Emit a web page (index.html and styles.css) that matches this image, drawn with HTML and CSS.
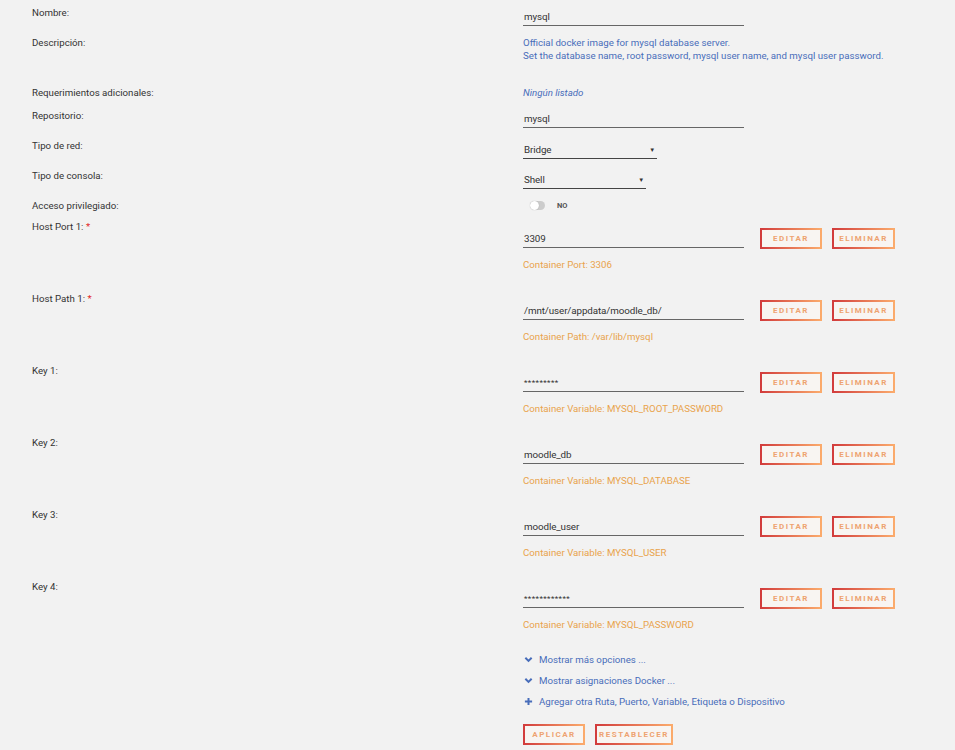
FILE: index.html
```html
<!DOCTYPE html>
<html lang="es">
<head>
    <meta charset="UTF-8">
    <title>Docker - mysql</title>
    <link rel="stylesheet" href="styles.css">
</head>
<body>
    <form class="form">
        <div class="row row-name">
            <div class="label">Nombre:</div>
            <div class="value"><div class="field wide">mysql</div></div>
        </div>
        <div class="row row-desc">
            <div class="label">Descripción:</div>
            <div class="value blue">Official docker image for mysql database server.<br>Set the database name, root password, mysql user name, and mysql user password.</div>
        </div>
        <div class="row row-req">
            <div class="label">Requerimientos adicionales:</div>
            <div class="value blue italic">Ningún listado</div>
        </div>
        <div class="row row-repo">
            <div class="label">Repositorio:</div>
            <div class="value"><div class="field wide">mysql</div></div>
        </div>
        <div class="row row-net">
            <div class="label">Tipo de red:</div>
            <div class="value"><div class="field select net">Bridge<span class="caret">▼</span></div></div>
        </div>
        <div class="row row-shell">
            <div class="label">Tipo de consola:</div>
            <div class="value"><div class="field select shell">Shell<span class="caret">▼</span></div></div>
        </div>
        <div class="row row-priv">
            <div class="label">Acceso privilegiado:</div>
            <div class="value toggle-wrap"><span class="toggle"><span class="knob"></span></span><span class="toggle-text">NO</span></div>
        </div>

        <div class="row row-cfg">
            <div class="label">Host Port 1: <span class="req">*</span></div>
            <div class="value">
                <div class="cfg-line"><div class="field wide">3309</div><button type="button" class="btn">Editar</button><button type="button" class="btn">Eliminar</button></div>
                <div class="orange">Container Port: 3306</div>
            </div>
        </div>
        <div class="row row-cfg">
            <div class="label">Host Path 1: <span class="req">*</span></div>
            <div class="value">
                <div class="cfg-line"><div class="field wide">/mnt/user/appdata/moodle_db/</div><button type="button" class="btn">Editar</button><button type="button" class="btn">Eliminar</button></div>
                <div class="orange">Container Path: /var/lib/mysql</div>
            </div>
        </div>
        <div class="row row-cfg">
            <div class="label">Key 1:</div>
            <div class="value">
                <div class="cfg-line"><div class="field wide masked">*********</div><button type="button" class="btn">Editar</button><button type="button" class="btn">Eliminar</button></div>
                <div class="orange">Container Variable: MYSQL_ROOT_PASSWORD</div>
            </div>
        </div>
        <div class="row row-cfg">
            <div class="label">Key 2:</div>
            <div class="value">
                <div class="cfg-line"><div class="field wide">moodle_db</div><button type="button" class="btn">Editar</button><button type="button" class="btn">Eliminar</button></div>
                <div class="orange">Container Variable: MYSQL_DATABASE</div>
            </div>
        </div>
        <div class="row row-cfg">
            <div class="label">Key 3:</div>
            <div class="value">
                <div class="cfg-line"><div class="field wide">moodle_user</div><button type="button" class="btn">Editar</button><button type="button" class="btn">Eliminar</button></div>
                <div class="orange">Container Variable: MYSQL_USER</div>
            </div>
        </div>
        <div class="row row-cfg">
            <div class="label">Key 4:</div>
            <div class="value">
                <div class="cfg-line"><div class="field wide masked">************</div><button type="button" class="btn">Editar</button><button type="button" class="btn">Eliminar</button></div>
                <div class="orange">Container Variable: MYSQL_PASSWORD</div>
            </div>
        </div>

        <div class="row row-links">
            <div class="label"></div>
            <div class="value">
                <div class="link"><svg class="ico" viewBox="0 0 10 10"><path d="M1.5 3 L5 6.5 L8.5 3" fill="none" stroke="currentColor" stroke-width="2.2"/></svg>Mostrar más opciones ...</div>
                <div class="link"><svg class="ico" viewBox="0 0 10 10"><path d="M1.5 3 L5 6.5 L8.5 3" fill="none" stroke="currentColor" stroke-width="2.2"/></svg>Mostrar asignaciones Docker ...</div>
                <div class="link"><svg class="ico" viewBox="0 0 10 10"><path d="M5 1 V9 M1 5 H9" fill="none" stroke="currentColor" stroke-width="2.2"/></svg>Agregar otra Ruta, Puerto, Variable, Etiqueta o Dispositivo</div>
                <div class="actions"><button type="button" class="btn">Aplicar</button><button type="button" class="btn">Restablecer</button></div>
            </div>
        </div>
    </form>
</body>
</html>
```

FILE: styles.css
```css
body {
    margin: 0;
    background-color: #f2f2f2;
    color: #333;
    font-family: Roboto, "Liberation Sans", sans-serif;
    font-size: 9.7px;
    line-height: 13px;
}

.form {
    padding: 6px 0 0 32px;
}

.row {
    display: grid;
    grid-template-columns: 491px 1fr;
}

.label {
    color: #333;
}

.req {
    color: #e22828;
}

.blue {
    color: #486dba;
}

.italic {
    font-style: italic;
}

.orange {
    color: #e9a34c;
    margin-top: 9px;
}

.field {
    box-sizing: border-box;
    height: 20px;
    padding: 4px 0 3px 1px;
    border-bottom: 1px solid #666;
    color: #333;
    font-size: 9.8px;
    letter-spacing: -0.1px;
}

.field.wide {
    width: 221px;
}

.field.masked {
    font-size: 8px;
    letter-spacing: 0.4px;
}

.select {
    display: flex;
    justify-content: space-between;
    border-bottom-color: #444;
}

.select.net {
    width: 134px;
}

.select.shell {
    width: 123px;
}

.caret {
    font-size: 6px;
    padding-right: 2px;
}

.row-name { margin-bottom: 10px; }
.row-desc { margin-bottom: 24px; }
.row-req { margin-bottom: 9px; }
.row-repo { margin-bottom: 11px; }
.row-repo .label { padding-top: 1px; }
.row-net { margin-bottom: 10px; }
.row-shell { margin-bottom: 10px; }
.row-priv { margin-bottom: 8px; }

.toggle-wrap {
    display: flex;
    align-items: center;
    gap: 12px;
    padding-left: 7px;
    height: 13px;
}

.toggle {
    position: relative;
    width: 15px;
    height: 9px;
    border-radius: 5px;
    background-color: #ccc;
}

.knob {
    position: absolute;
    left: 0;
    top: 0;
    width: 9px;
    height: 9px;
    border-radius: 50%;
    background-color: #fff;
    box-shadow: 0 0 1px rgba(0, 0, 0, 0.3);
}

.toggle-text {
    font-size: 7.5px;
    font-weight: bold;
    color: #555;
}

.row-cfg {
    height: 72px;
}

.row-cfg .value {
    padding-top: 8px;
}

.cfg-line {
    display: flex;
    align-items: flex-start;
}

.cfg-line .field {
    margin-right: 16px;
}

.btn {
    box-sizing: border-box;
    height: 21px;
    margin: 0 10px 0 0;
    padding: 0;
    border: 2px solid;
    border-image: linear-gradient(90deg, #d23c3c, #fbab6c) 1;
    background-color: #f8f5f2;
    color: #eea370;
    font-family: Roboto, "Liberation Sans", sans-serif;
    font-size: 8px;
    font-weight: bold;
    letter-spacing: 1.5px;
    text-transform: uppercase;
}

.cfg-line .btn:nth-of-type(1) {
    width: 62px;
}

.cfg-line .btn:nth-of-type(2) {
    width: 63px;
}

.row-links {
    margin-top: 1px;
}

.link {
    display: flex;
    align-items: center;
    color: #486dba;
    height: 13px;
    margin-bottom: 8px;
}

.ico {
    width: 9px;
    height: 9px;
    margin: 0 6px 0 1px;
}

.actions {
    display: flex;
    padding-top: 8px;
}

.actions .btn {
    width: 62px;
}

.actions .btn + .btn {
    width: 78px;
}
```
